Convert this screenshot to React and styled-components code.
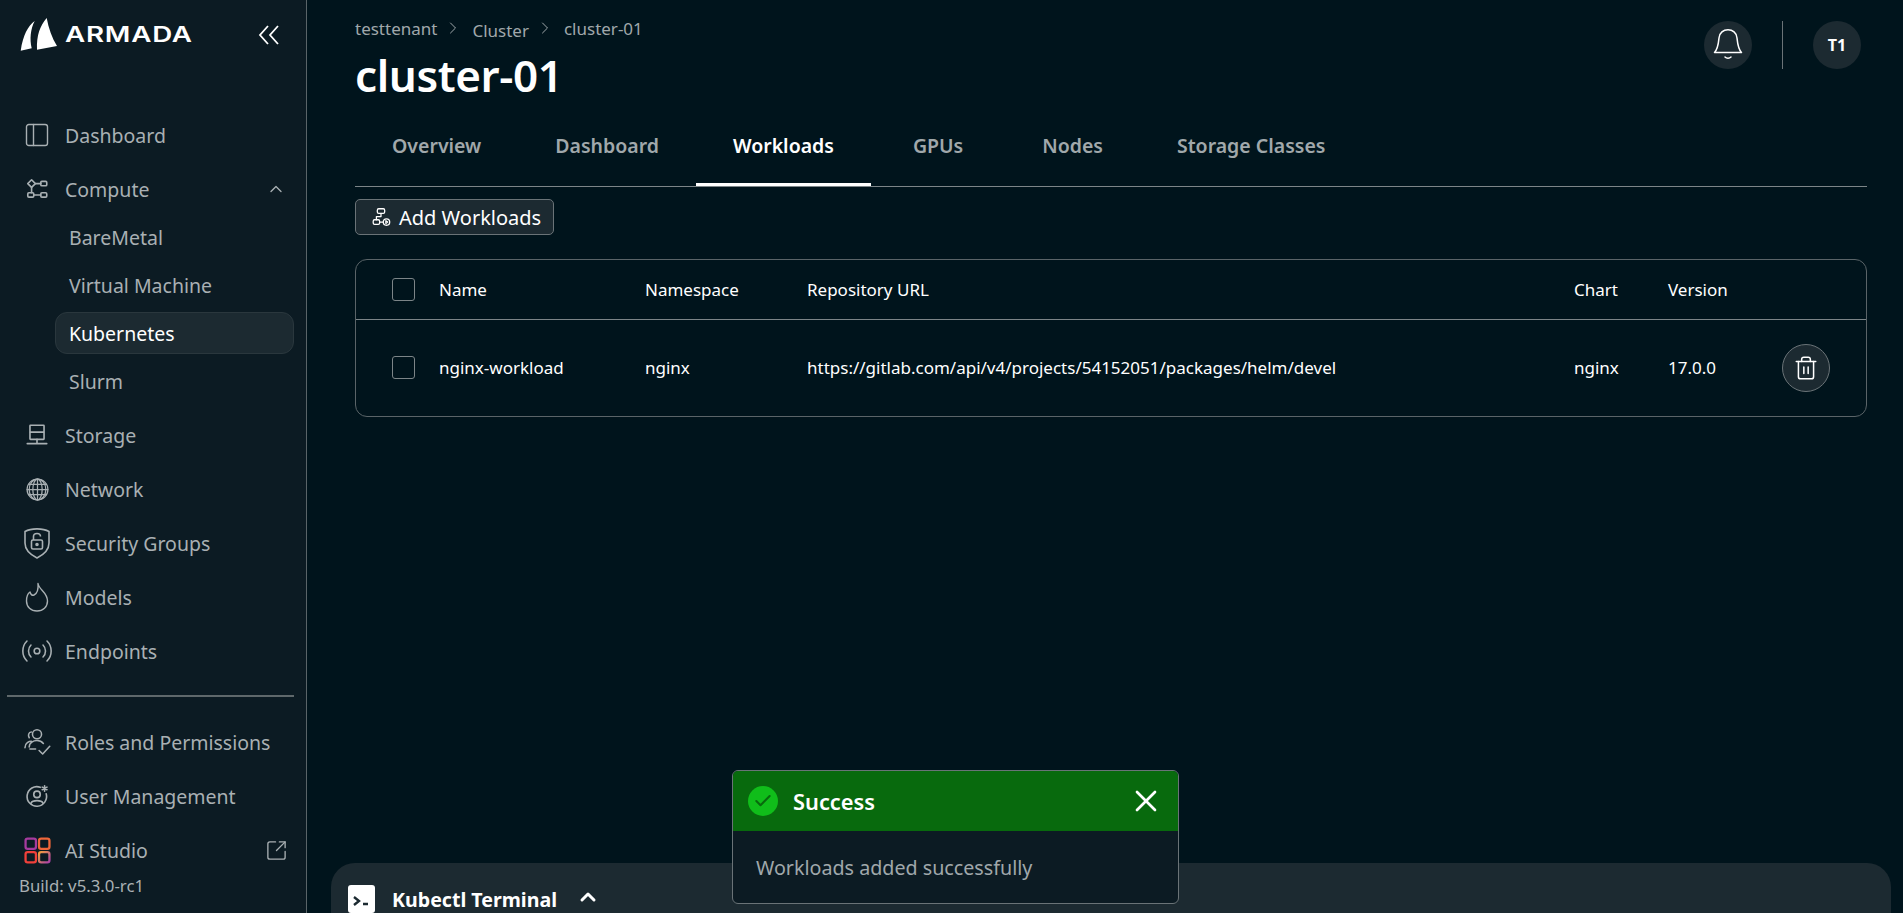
import React from 'react';
import styled, { createGlobalStyle } from 'styled-components';
import {
  PanelLeft, ChevronUp, ChevronRight, Radio, SquareArrowOutUpRight, Trash2, X, Check,
} from 'lucide-react';

const GlobalStyle = createGlobalStyle`
  html, body { margin: 0; padding: 0; height: 100%; }
  body {
    background: #00141c;
    color: #fff;
    font-family: "Noto Sans", "Open Sans", sans-serif;
    overflow: hidden;
  }
  #root { height: 100%; }
`;

const Page = styled.div`
  display: flex;
  height: 913px;
  position: relative;
  overflow: hidden;
`;

// Sidebar
const Sidebar = styled.aside`
  width: 294px;
  flex: none;
  background: #0c1b23;
  border-right: 1px solid #5a6468;
  display: flex;
  flex-direction: column;
  padding: 17px 12px 0 0;
`;

const LogoRow = styled.div`
  display: flex;
  align-items: center;
  height: 35px;
  padding-left: 20px;
  margin-bottom: 56px;
  color: #fff;
`;

const LogoText = styled.span`
  font-family: "Inter", "Liberation Sans", sans-serif;
  font-weight: 600;
  font-size: 21px;
  letter-spacing: 0.6px;
  margin-left: 7px;
  transform: scaleX(1.32);
  transform-origin: left center;
`;

const CollapseButton = styled.span`
  margin-left: auto;
  margin-right: 14px;
  display: flex;
  color: #fff;
`;

const Nav = styled.nav`
  display: flex;
  flex-direction: column;
`;

const NavItem = styled.div`
  display: flex;
  align-items: center;
  height: 54px;
  color: #a9b0b3;
  font-size: 19.5px;
  padding-left: 20px;
`;

const NavIcon = styled.span`
  width: 34px;
  height: 34px;
  margin-right: 11px;
  display: flex;
  align-items: center;
  justify-content: center;
  flex: none;
  color: #a9b0b3;
`;

const TrailingIcon = styled.span`
  margin-left: auto;
  margin-right: ${(p) => p.$right}px;
  display: flex;
  color: #a9b0b3;
`;

const SubList = styled.div`
  display: flex;
  flex-direction: column;
  margin-top: -3px;
  margin-bottom: 3px;
`;

const SubItem = styled.div`
  display: flex;
  align-items: center;
  box-sizing: border-box;
  height: ${(p) => (p.$active ? 42 : 40)}px;
  margin: ${(p) => (p.$active ? '3px 0 3px 55px' : '4px 0 4px 55px')};
  padding-left: 13px;
  font-size: 19.5px;
  color: ${(p) => (p.$active ? '#fff' : '#a9b0b3')};
  background: ${(p) => (p.$active ? '#1c2a31' : 'transparent')};
  border: 1px solid ${(p) => (p.$active ? '#2a373d' : 'transparent')};
  border-radius: 12px;
`;

const Divider = styled.hr`
  border: 0;
  height: 2px;
  background: #5f686b;
  margin: 17px 0 18px 7px;
`;

const BuildLabel = styled.div`
  font-size: 16.8px;
  color: #a9b0b3;
  padding-left: 19px;
  margin-top: -3px;
`;

// Main column
const Main = styled.main`
  flex: 1;
  min-width: 0;
  display: flex;
  flex-direction: column;
  padding: 0 36px 0 48px;
`;

const Header = styled.header`
  display: flex;
  justify-content: space-between;
  height: 110px;
`;

const TitleBlock = styled.div`
  padding-top: 15px;
`;

const Breadcrumb = styled.div`
  display: flex;
  align-items: center;
  height: 26px;
  font-size: 17px;
  color: #a0a8ab;
`;

const Crumb = styled.span`
  padding-top: ${(p) => (p.$low ? 4 : 0)}px;
`;

const CrumbSep = styled.span`
  display: flex;
  margin: 0 9px 0 6px;
  color: #a0a8ab;
`;

const Title = styled.h1`
  margin: 8px 0 0;
  font-size: 44px;
  line-height: 52px;
  font-weight: 600;
  letter-spacing: -0.4px;
  color: #fff;
`;

const HeaderActions = styled.div`
  display: flex;
  align-items: flex-start;
  padding-top: 21px;
  margin-right: 6px;
`;

const RoundButton = styled.div`
  width: 48px;
  height: 48px;
  border-radius: 50%;
  background: #1c2a31;
  display: flex;
  align-items: center;
  justify-content: center;
  color: #fff;
  font-weight: 700;
  font-size: 16px;
`;

const HeaderDivider = styled.div`
  width: 1px;
  height: 48px;
  background: #6a7377;
  margin: 0 30px;
`;

const Tabs = styled.div`
  display: flex;
  height: 77px;
  border-bottom: 1px solid #7c8588;
  box-sizing: border-box;
  width: 100%;
`;

const Tab = styled.div`
  display: flex;
  align-items: center;
  padding: 0 37px 2px;
  height: 76px;
  box-sizing: border-box;
  margin-right: ${(p) => p.$gap}px;
  font-size: 19.5px;
  font-weight: 600;
  color: ${(p) => (p.$active ? '#fff' : '#a0a8ab')};
  border-bottom: 3px solid ${(p) => (p.$active ? '#fff' : 'transparent')};
`;

const AddButton = styled.button`
  display: inline-flex;
  align-items: center;
  align-self: flex-start;
  gap: 7px;
  height: 36px;
  margin-top: 12px;
  padding: 0 12px 0 14px;
  background: #1c2a31;
  border: 1px solid #6a7377;
  border-radius: 5px;
  color: #fff;
  font-family: inherit;
  font-size: 20px;
`;

const TableCard = styled.div`
  margin-top: 24px;
  border: 1px solid #5a6468;
  border-radius: 12px;
  height: 158px;
  box-sizing: border-box;
`;

const TableRow = styled.div`
  display: grid;
  grid-template-columns: 36px 47px 206px 162px 767px 94px 114px 48px;
  align-items: center;
  height: ${(p) => p.$h}px;
  font-size: 17px;
  color: #fff;
  border-bottom: ${(p) => (p.$head ? '1px solid #7c8588' : 'none')};
  box-sizing: border-box;
`;

const Checkbox = styled.span`
  width: 23px;
  height: 23px;
  box-sizing: border-box;
  border: 1px solid #7c8588;
  border-radius: 3px;
  grid-column: 2;
  display: block;
`;

const DeleteButton = styled.div`
  width: 48px;
  height: 48px;
  box-sizing: border-box;
  border: 1px solid #6a7377;
  border-radius: 50%;
  background: #1c2a31;
  display: flex;
  align-items: center;
  justify-content: center;
  color: #fff;
`;

const TerminalBar = styled.div`
  margin-top: auto;
  margin-left: -24px;
  margin-right: -24px;
  height: 50px;
  background: #1c2a31;
  border-radius: 24px 24px 0 0;
  display: flex;
  align-items: flex-start;
  padding: 22px 0 0 17px;
  box-sizing: border-box;
  overflow: hidden;
`;

const TerminalLabel = styled.span`
  font-size: 19.6px;
  line-height: 30px;
  font-weight: 700;
  margin: 0 19px 0 17px;
  color: #fff;
`;

// Toast sits over the page
const Toast = styled.div`
  position: absolute;
  left: 732px;
  top: 770px;
  width: 447px;
  height: 134px;
  box-sizing: border-box;
  background: #0c1b23;
  border: 1px solid #6a7377;
  border-radius: 6px;
  overflow: hidden;
`;

const ToastHead = styled.div`
  display: flex;
  align-items: center;
  height: 60px;
  padding: 0 14px 0 15px;
  background: #086a0d;
  color: #fff;
  font-size: 21.8px;
  font-weight: 600;
`;

const ToastCheck = styled.span`
  width: 30px;
  height: 30px;
  border-radius: 50%;
  background: #10bd1a;
  display: flex;
  align-items: center;
  justify-content: center;
  color: #086a0d;
  margin-right: 15px;
`;

const ToastClose = styled.span`
  margin-left: auto;
  display: flex;
  color: #fff;
`;

const ToastBody = styled.div`
  padding: 23px 23px;
  color: #a0a8ab;
  font-size: 19.7px;
`;

const IconSvg = ({ size = 24, children, sw = 1.5 }) => (
  <svg width={size} height={size} viewBox="0 0 24 24" fill="none" stroke="currentColor" strokeWidth={sw} strokeLinecap="round" strokeLinejoin="round">
    {children}
  </svg>
);

const ArmadaMark = () => (
  <svg width="38" height="35" viewBox="0 0 38 35" fill="#fff" style={{ flex: 'none' }}>
    <path d="M14.700 4 C8 9 3 18 0.700 33.700 L11.700 31.300 C9.500 22 10.500 12 14.700 4Z" />
    <path d="M26.700 1 C20 9 16.500 18 17 32.700 L37 29 C32 21 28.500 11 26.700 1Z" />
  </svg>
);

const DoubleChevron = () => (
  <svg width="22" height="20" viewBox="0 0 22 20" fill="none" stroke="currentColor" strokeWidth="1.800">
    <path d="M10 1 L2 10 L10 19 M20 1 L12 10 L20 19" />
  </svg>
);

const ComputeIcon = () => (
  <IconSvg size={26}>
    <path d="M7 3.500 L10.500 7 L7 10.500 L3.500 7Z" />
    <rect x="15.500" y="5" width="5.500" height="4" rx="1" />
    <rect x="3.500" y="15.500" width="5.500" height="4" rx="1" />
    <rect x="15.500" y="15.500" width="5.500" height="4" rx="1" />
    <path d="M10.500 7 H15.500 M7 10.500 V15.500 M9 17.500 H15.500" />
  </IconSvg>
);

const StorageIcon = () => (
  <IconSvg size={26}>
    <rect x="5.500" y="3" width="13" height="6.500" rx="0.500" />
    <rect x="5.500" y="9.500" width="13" height="6.500" rx="0.500" />
    <path d="M12 16 V20 M3 20 H21" />
  </IconSvg>
);

const GlobeIcon = () => (
  <IconSvg size={25} sw={1.2}>
    <circle cx="12" cy="12" r="10" />
    <ellipse cx="12" cy="12" rx="4.500" ry="10" />
    <ellipse cx="12" cy="12" rx="8" ry="10" />
    <path d="M12 2 V22 M2 12 H22 M3.500 7 H20.500 M3.500 17 H20.500" />
  </IconSvg>
);

const ShieldIcon = () => (
  <svg width="30" height="34" viewBox="0 0 30 34" fill="none" stroke="currentColor" strokeWidth="1.600">
    <path d="M3 5.500 C9 2 21 2 27 5.500 V17 C27 24 21 29 15 32 C9 29 3 24 3 17Z" strokeLinejoin="round" />
    <rect x="9.500" y="14" width="11" height="9" rx="1.500" />
    <path d="M11.500 14 V10.500 C11.500 6.500 18.500 6.500 18.500 10.500" />
    <circle cx="15" cy="18.500" r="1" fill="currentColor" />
  </svg>
);

const FlameIcon = () => (
  <svg width="24" height="30" viewBox="0 0 24 30" fill="none" stroke="currentColor" strokeWidth="1.400" strokeLinejoin="round">
    <path d="M13 1.500 C14 8 22.500 10 22.500 19 C22.500 25 18 29 12 29 C6 29 1.500 25 1.500 19 C1.500 14 3.500 11 5 10 C5.500 12 7 14 9 13 C12 11.500 13.500 7 13 1.500Z" />
  </svg>
);

const RolesIcon = () => (
  <IconSvg size={34} sw={1.1}>
    <circle cx="12" cy="6.500" r="3.200" />
    <path d="M8 5 C6 5 5.500 7.500 6.500 9 M3.500 16 C3.500 12.500 6.500 11.500 8 11.500 M6.500 15.500 C6.500 12.500 9.500 11 12 11 C14 11 15.500 11.800 16.500 13 M7 17 H11 M13.500 18 L16 20.500 L21 15" />
  </IconSvg>
);

const UserGearIcon = () => (
  <IconSvg size={26}>
    <path d="M15 4 A9 9 0 1 0 20.500 10" />
    <circle cx="12" cy="10.500" r="3" />
    <path d="M6.500 18.500 C8 15.500 16 15.500 17.500 18.500" />
    <path d="M19 2.500 V7.500 M16.800 3.800 L21.200 6.200 M21.200 3.800 L16.800 6.200" />
  </IconSvg>
);

const StudioIcon = () => (
  <svg width="27" height="27" viewBox="0 0 26 26" fill="none" strokeWidth="2.200">
    <defs>
      <linearGradient id="studioGrad" x1="0" y1="0" x2="1" y2="1">
        <stop offset="0" stopColor="#f3a03a" />
        <stop offset="1" stopColor="#a83ea8" />
      </linearGradient>
    </defs>
    <rect x="1.500" y="1.500" width="10" height="10" rx="2" stroke="#a63b9f" />
    <rect x="14.500" y="1.500" width="10" height="10" rx="2" stroke="#f0673a" />
    <rect x="1.500" y="14.500" width="10" height="10" rx="2" stroke="#f0403a" />
    <rect x="14.500" y="14.500" width="10" height="10" rx="2" stroke="url(#studioGrad)" />
  </svg>
);

const WorkflowIcon = () => (
  <IconSvg size={22} sw={1.4}>
    <rect x="8" y="3" width="8" height="5" rx="1.500" />
    <rect x="3.500" y="15" width="7" height="5" rx="1.500" />
    <circle cx="18" cy="17.500" r="3.500" />
    <path d="M12 8 V11.500 H7 V15 M10.500 17.500 H14.500" />
    <path d="M17.300 16 L19.300 17.500 L17.300 19Z" />
  </IconSvg>
);

const BellIcon = () => (
  <svg width="30" height="34" viewBox="0 0 30 34" fill="none" stroke="#fff" strokeWidth="1.500">
    <path d="M1.500 24.500 C5 21 5.500 15 6 10 C6.500 -1 23.500 -1 24 10 C24.500 15 25 21 28.500 24.500Z" strokeLinejoin="round" />
    <path d="M12 29 C13.500 30.500 16.500 30.500 18 29" strokeLinecap="round" />
  </svg>
);

const TerminalIcon = () => (
  <svg width="27" height="28" viewBox="0 0 27 28" style={{ flex: 'none' }}>
    <rect width="27" height="28" rx="3" fill="#fff" />
    <path d="M6 12 L11 16 L6 20" fill="none" stroke="#1c2a31" strokeWidth="2.400" />
    <path d="M15 19 H20" stroke="#1c2a31" strokeWidth="2.400" />
  </svg>
);

const mainItems = [
  { label: 'Storage', icon: <StorageIcon /> },
  { label: 'Network', icon: <GlobeIcon /> },
  { label: 'Security Groups', icon: <ShieldIcon /> },
  { label: 'Models', icon: <FlameIcon /> },
  { label: 'Endpoints', icon: <Radio size={34} strokeWidth={1.1} /> },
];

const tabs = [
  { label: 'Overview', gap: 0 },
  { label: 'Dashboard', gap: 0 },
  { label: 'Workloads', active: true, gap: 5 },
  { label: 'GPUs', gap: 5 },
  { label: 'Nodes', gap: 0 },
  { label: 'Storage Classes', gap: 0 },
];

export default function App() {
  return (
    <>
      <GlobalStyle />
      <Page>
        <Sidebar>
          <LogoRow>
            <ArmadaMark />
            <LogoText>ARMADA</LogoText>
            <CollapseButton><DoubleChevron /></CollapseButton>
          </LogoRow>
          <Nav>
            <NavItem>
              <NavIcon><PanelLeft size={28} strokeWidth={1.2} /></NavIcon>
              Dashboard
            </NavItem>
            <NavItem>
              <NavIcon><ComputeIcon /></NavIcon>
              Compute
              <TrailingIcon $right={8}><ChevronUp size={20} strokeWidth={1.6} /></TrailingIcon>
            </NavItem>
            <SubList>
              <SubItem>BareMetal</SubItem>
              <SubItem>Virtual Machine</SubItem>
              <SubItem $active>Kubernetes</SubItem>
              <SubItem>Slurm</SubItem>
            </SubList>
            {mainItems.map((item) => (
              <NavItem key={item.label}>
                <NavIcon>{item.icon}</NavIcon>
                {item.label}
              </NavItem>
            ))}
          </Nav>
          <Divider />
          <Nav>
            <NavItem>
              <NavIcon><RolesIcon /></NavIcon>
              Roles and Permissions
            </NavItem>
            <NavItem>
              <NavIcon><UserGearIcon /></NavIcon>
              User Management
            </NavItem>
            <NavItem>
              <NavIcon><StudioIcon /></NavIcon>
              AI Studio
              <TrailingIcon $right={6}><SquareArrowOutUpRight size={23} strokeWidth={1.4} /></TrailingIcon>
            </NavItem>
          </Nav>
          <BuildLabel>Build: v5.3.0-rc1</BuildLabel>
        </Sidebar>

        <Main>
          <Header>
            <TitleBlock>
              <Breadcrumb>
                <Crumb>testtenant</Crumb>
                <CrumbSep><ChevronRight size={20} strokeWidth={1.2} /></CrumbSep>
                <Crumb $low>Cluster</Crumb>
                <CrumbSep><ChevronRight size={20} strokeWidth={1.2} /></CrumbSep>
                <Crumb>cluster-01</Crumb>
              </Breadcrumb>
              <Title>cluster-01</Title>
            </TitleBlock>
            <HeaderActions>
              <RoundButton><BellIcon /></RoundButton>
              <HeaderDivider />
              <RoundButton>T1</RoundButton>
            </HeaderActions>
          </Header>

          <Tabs>
            {tabs.map((tab) => (
              <Tab key={tab.label} $active={tab.active} $gap={tab.gap}>{tab.label}</Tab>
            ))}
          </Tabs>

          <AddButton><WorkflowIcon />Add Workloads</AddButton>

          <TableCard>
            <TableRow $head $h={60}>
              <Checkbox />
              <span>Name</span>
              <span>Namespace</span>
              <span>Repository URL</span>
              <span>Chart</span>
              <span>Version</span>
            </TableRow>
            <TableRow $h={95}>
              <Checkbox />
              <span>nginx-workload</span>
              <span>nginx</span>
              <span>https://gitlab.com/api/v4/projects/54152051/packages/helm/devel</span>
              <span>nginx</span>
              <span>17.0.0</span>
              <DeleteButton><Trash2 size={26} strokeWidth={1.4} /></DeleteButton>
            </TableRow>
          </TableCard>

          <TerminalBar>
            <TerminalIcon />
            <TerminalLabel>Kubectl Terminal</TerminalLabel>
            <ChevronUp size={24} strokeWidth={3} />
          </TerminalBar>
        </Main>

        <Toast>
          <ToastHead>
            <ToastCheck><Check size={20} strokeWidth={2.5} /></ToastCheck>
            Success
            <ToastClose><X size={36} strokeWidth={1.8} /></ToastClose>
          </ToastHead>
          <ToastBody>Workloads added successfully</ToastBody>
        </Toast>
      </Page>
    </>
  );
}
